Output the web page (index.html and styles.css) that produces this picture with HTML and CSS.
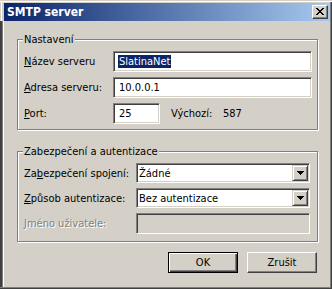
FILE: index.html
```html
<!DOCTYPE html>
<html lang="cs">
<head>
<meta charset="utf-8">
<title>SMTP server</title>
<link rel="stylesheet" href="styles.css">
</head>
<body>
<div class="window">
  <div class="titlebar">
    <span class="title">SMTP server</span>
    <div class="close">
      <svg width="8" height="7" viewBox="0 0 8 7"><path d="M0 0h2v1H0zM6 0h2v1H6zM1 1h2v1H1zM5 1h2v1H5zM2 2h4v1H2zM3 3h2v1H3zM2 4h4v1H2zM1 5h2v1H1zM5 5h2v1H5zM0 6h2v1H0zM6 6h2v1H6z" fill="#000"/></svg>
    </div>
  </div>
  <div class="content">
    <div class="group g1">
      <div class="legend">Nastavení</div>
      <div class="rows">
        <div class="row">
          <span class="lbl"><u>N</u>ázev serveru</span>
          <div class="edit wide"><span class="sel">SlatinaNet</span></div>
        </div>
        <div class="row">
          <span class="lbl"><u>A</u>dresa serveru:</span>
          <div class="edit wide">10.0.0.1</div>
        </div>
        <div class="row">
          <span class="lbl"><u>P</u>ort:</span>
          <div class="edit port">25</div>
          <span class="def">Výchozí:</span>
          <span class="defv">587</span>
        </div>
      </div>
    </div>
    <div class="group g2">
      <div class="legend">Zabezpečení a autentizace</div>
      <div class="rows">
        <div class="row combo-row">
          <span class="lbl">Za<u>b</u>ezpečení spojení:</span>
          <div class="combo"><span class="ctext">Žádné</span><div class="drop"><svg width="7" height="4" viewBox="0 0 7 4"><path d="M0 0h7v1H0zM1 1h5v1H1zM2 2h3v1H2zM3 3h1v1H3z" fill="#000"/></svg></div></div>
        </div>
        <div class="row combo-row">
          <span class="lbl"><u>Z</u>působ autentizace:</span>
          <div class="combo"><span class="ctext">Bez autentizace</span><div class="drop"><svg width="7" height="4" viewBox="0 0 7 4"><path d="M0 0h7v1H0zM1 1h5v1H1zM2 2h3v1H2zM3 3h1v1H3z" fill="#000"/></svg></div></div>
        </div>
        <div class="row">
          <span class="lbl disabled"><u>J</u>méno uživatele:</span>
          <div class="edit off"></div>
        </div>
      </div>
    </div>
    <div class="buttons">
      <div class="btn default">OK</div>
      <div class="btn">Zrušit</div>
    </div>
  </div>
</div>
</body>
</html>
```
FILE: styles.css
```css
* { box-sizing: border-box; }
html, body { margin: 0; padding: 0; }
body {
  width: 332px;
  height: 289px;
  overflow: hidden;
  font-family: "DejaVu Sans Condensed", "Liberation Sans", sans-serif;
  font-size: 11px;
  color: #000;
  background: #d4d0c8;
}
.window {
  width: 332px;
  height: 289px;
  background: #d4d0c8;
  padding: 3px 2px 2px 4px;
  display: flex;
  flex-direction: column;
  box-shadow: inset 0 1px 0 #d4d0c8, inset 0 2px 0 #fff,
    inset -1px -1px 0 #404040, inset -2px -2px 0 #808080,
    inset 1px 0 0 #d4d0c8, inset 2px 0 0 #fff;
}
.titlebar {
  height: 18px;
  flex: none;
  background: linear-gradient(to right, #0a246a, #a6caf0);
  display: flex;
  align-items: center;
  justify-content: space-between;
  padding: 0 2px 0 3px;
}
.title {
  color: #fff;
  font-weight: bold;
  font-size: 12px;
  line-height: 14px;
}
.close {
  width: 16px;
  height: 14px;
  background: #d4d0c8;
  border: 1px solid;
  border-color: #fff #404040 #404040 #fff;
  box-shadow: inset -1px -1px 0 #808080;
  display: flex;
  align-items: center;
  justify-content: center;
  padding: 0 0 1px 0;
}
.close svg { display: block; }
.content {
  flex: 1;
  margin-left: -4px;
  padding-left: 4px;
  background: linear-gradient(to right, #404040 0 2px, #808080 2px 3px, #fff 3px 4px, #d4d0c8 4px);
}
.group {
  width: 301px;
  height: 91px;
  margin-left: 13px;
  border: 1px solid #808080;
  box-shadow: 1px 1px 0 #fff, inset 1px 1px 0 #fff;
}
.g1 { margin-top: 18px; }
.g2 { margin-top: 21px; }
.legend {
  width: max-content;
  margin: -7px 0 -6px 5px;
  padding: 0 1px;
  background: #d4d0c8;
  line-height: 13px;
  position: relative;
}
.rows {
  padding: 11px 0 0 6px;
  display: flex;
  flex-direction: column;
  gap: 5px;
}
.row {
  display: flex;
  align-items: center;
  height: 21px;
}
.combo-row { height: 20px; }
.g1 .lbl { width: 89px; }
.g2 .lbl { width: 112px; }
.lbl { white-space: nowrap; }
.disabled {
  color: #808080;
  text-shadow: 1px 1px 0 #fff;
}
.edit {
  height: 21px;
  background: #fff;
  border: 1px solid;
  border-color: #808080 #fff #fff #808080;
  box-shadow: inset 1px 1px 0 #404040, inset -1px -1px 0 #d4d0c8;
  padding-left: 5px;
  display: flex;
  align-items: center;
  white-space: nowrap;
}
.wide { width: 199px; }
.port { width: 47px; }
.off { width: 174px; background: #d4d0c8; }
.sel {
  background: #0a246a;
  color: #fff;
  line-height: 13px;
  padding: 0 1px;
  margin-left: -1px;
}
.def { margin-left: 11px; width: 52px; }
.combo {
  width: 174px;
  height: 20px;
  background: #fff;
  border: 1px solid;
  border-color: #808080 #fff #fff #808080;
  box-shadow: inset 1px 1px 0 #404040, inset -1px -1px 0 #d4d0c8;
  padding: 1px;
  display: flex;
  align-items: center;
}
.ctext { margin-left: 1px; white-space: nowrap; }
.drop {
  margin-left: auto;
  width: 16px;
  height: 16px;
  background: #d4d0c8;
  border: 1px solid;
  border-color: #d4d0c8 #404040 #404040 #d4d0c8;
  box-shadow: inset 1px 1px 0 #fff, inset -1px -1px 0 #808080;
  display: flex;
  align-items: center;
  justify-content: center;
}
.drop svg { display: block; }
.buttons {
  display: flex;
  justify-content: flex-end;
  gap: 9px;
  margin-top: 10px;
  padding-right: 13px;
}
.btn {
  width: 70px;
  height: 21px;
  background: #d4d0c8;
  border: 1px solid;
  border-color: #fff #404040 #404040 #fff;
  box-shadow: inset -1px -1px 0 #808080;
  display: flex;
  align-items: center;
  justify-content: center;
}
.btn.default {
  border-color: #000;
  box-shadow: inset 1px 1px 0 #fff, inset -1px -1px 0 #404040, inset -2px -2px 0 #808080;
}
```
